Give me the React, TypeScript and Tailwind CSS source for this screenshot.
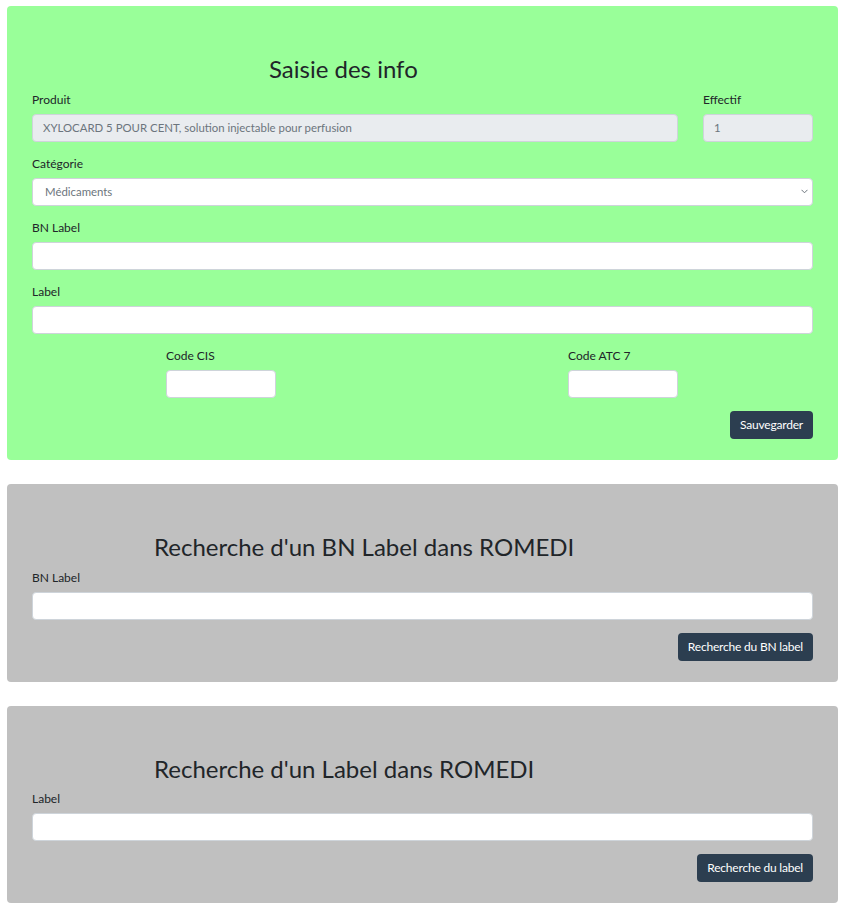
import React from "react";

const font = { fontFamily: "Lato, 'Open Sans', sans-serif" };

function Field({ label, children, className = "" }: { label: string; children: React.ReactNode; className?: string }) {
  return (
    <div className={className}>
      <label className="block text-[12px] leading-4 text-[#212529] mb-[6px]">{label}</label>
      {children}
    </div>
  );
}

const base =
  "block w-full h-[28px] rounded-[4px] border border-[#ced4da] px-[10px] text-[11.4px] outline-none";
const inputCls = base + " bg-white text-[#495057]";
const disabledCls = base + " bg-[#e9ecef] text-[#6c757d]";

function Panel({ bg, children }: { bg: string; children: React.ReactNode }) {
  return <div className={`rounded-[4px] pt-[49px] px-[25px] pb-[21px] ${bg}`}>{children}</div>;
}

function Btn({ children }: { children: React.ReactNode }) {
  return (
    <div className="flex justify-end mt-[13px]">
      <button className="h-[28px] rounded-[4px] bg-[#2c3e50] px-[10px] text-[12px] leading-4 tracking-[-0.2px] text-white">
        {children}
      </button>
    </div>
  );
}

export default function App() {
  return (
    <div style={font} className="min-h-screen bg-white pt-[6px] pb-[8px] pl-[7px] w-[838px]">
      <Panel bg="bg-[#99ff99]">
        <h3 className="text-[24px] leading-[1.2] text-[#212529] pl-[237px] mb-[8px]">Saisie des info</h3>
        <div className="flex gap-[25px]">
          <Field label="Produit" className="flex-1">
            <input
              disabled
              value="XYLOCARD 5 POUR CENT, solution injectable pour perfusion"
              readOnly
              className={disabledCls}
            />
          </Field>
          <Field label="Effectif" className="w-[110px]">
            <input disabled value="1" readOnly className={disabledCls} />
          </Field>
        </div>
        <Field label="Catégorie" className="mt-[14px]">
          <div className="relative">
            <select className={base + " appearance-none bg-white px-[12px] text-[#6c757d]"} defaultValue="m">
              <option value="m">Médicaments</option>
            </select>
            <svg
              className="absolute right-[5px] top-[11px]"
              width="7"
              height="5"
              viewBox="0 0 7 5"
              fill="none"
              stroke="#6c757d"
              strokeWidth="1"
            >
              <path d="M0.5 0.8L3.5 3.8L6.5 0.8" />
            </svg>
          </div>
        </Field>
        <Field label="BN Label" className="mt-[14px]">
          <input className={inputCls} />
        </Field>
        <Field label="Label" className="mt-[14px]">
          <input className={inputCls} />
        </Field>
        <div className="flex mt-[14px]">
          <Field label="Code CIS" className="w-[110px] ml-[134px]">
            <input className={inputCls} />
          </Field>
          <Field label="Code ATC 7" className="w-[110px] ml-[292px]">
            <input className={inputCls} />
          </Field>
        </div>
        <Btn>Sauvegarder</Btn>
      </Panel>

      <div className="mt-[24px]">
        <Panel bg="bg-[#c0c0c0]">
          <h2 className="text-[24px] leading-[1.2] text-[#212529] pl-[122px] mb-[8px]">
            Recherche d'un BN Label dans ROMEDI
          </h2>
          <Field label="BN Label">
            <input className={inputCls} />
          </Field>
          <Btn>Recherche du BN label</Btn>
        </Panel>
      </div>

      <div className="mt-[24px]">
        <Panel bg="bg-[#c0c0c0]">
          <h2 className="text-[24px] leading-[1.2] text-[#212529] pl-[122px] mb-[8px]">
            Recherche d'un Label dans ROMEDI
          </h2>
          <Field label="Label">
            <input className={inputCls} />
          </Field>
          <Btn>Recherche du label</Btn>
        </Panel>
      </div>
    </div>
  );
}
